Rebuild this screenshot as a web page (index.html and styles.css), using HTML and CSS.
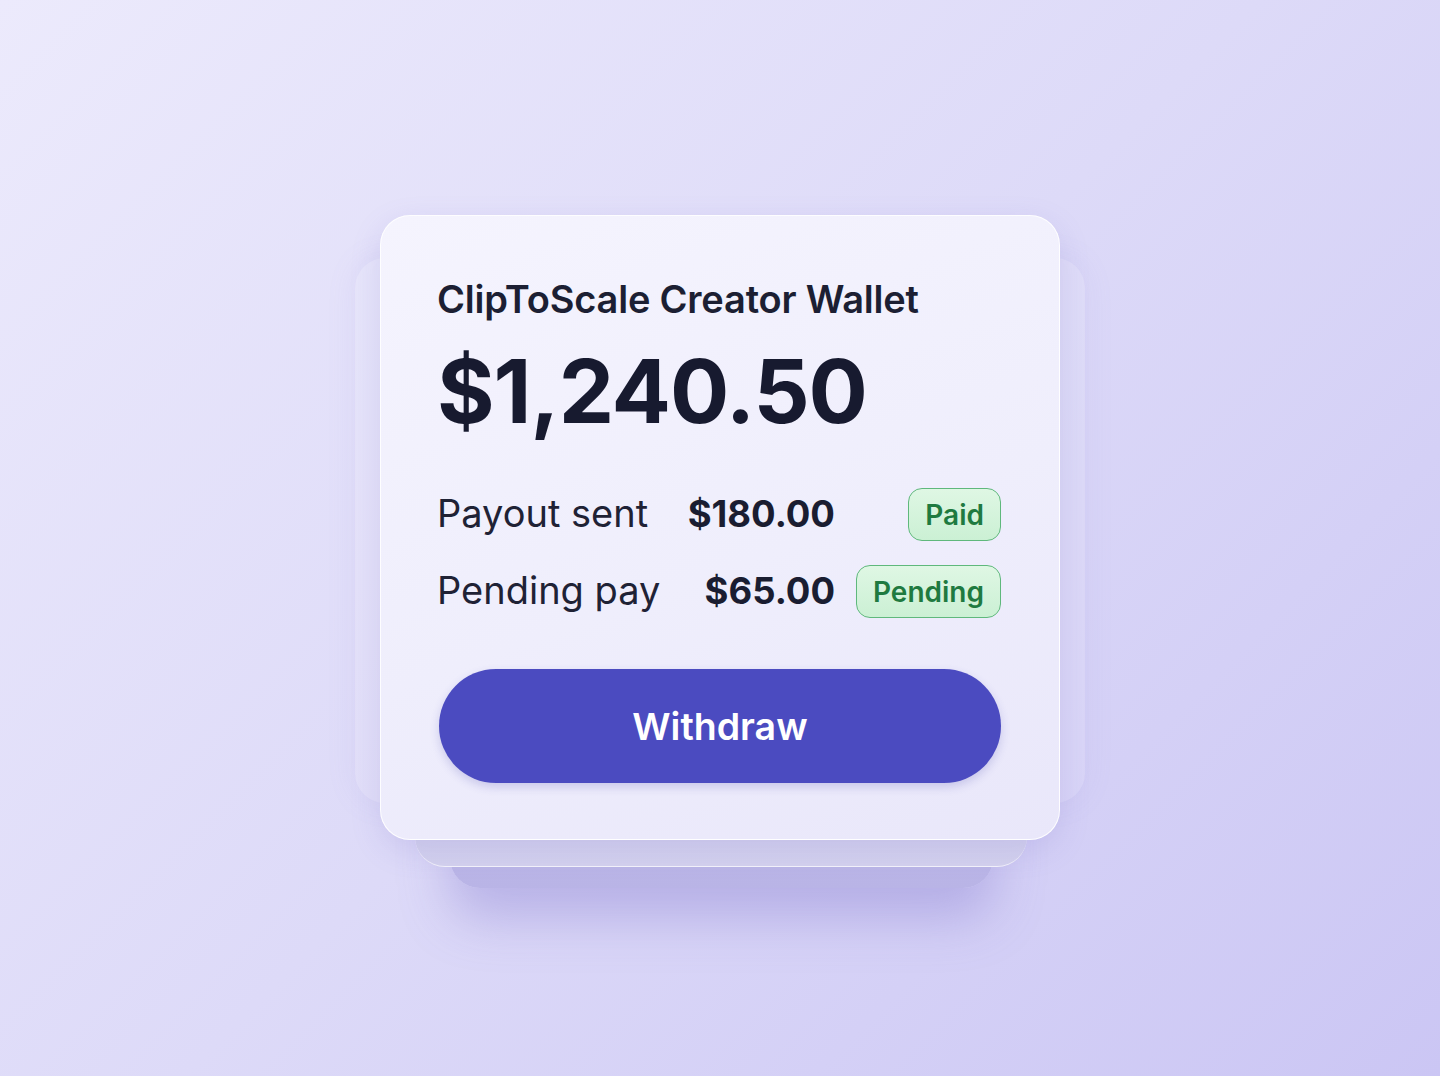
FILE: index.html
```html
<!DOCTYPE html>
<html lang="en">

<head>
  <meta charset="UTF-8">
  <meta name="viewport" content="width=device-width, initial-scale=1.0">
  <title>ClipToScale Creator Wallet</title>
  <link rel="stylesheet" href="styles.css">
</head>

<body>
  <main class="stage">
    <div class="wallet">
      <div class="glass"></div>
      <div class="layer layer-back"></div>
      <div class="layer layer-mid"></div>
      <section class="card">
        <h1 class="card-title">ClipToScale Creator Wallet</h1>
        <p class="balance">$1,240.50</p>
        <div class="rows">
          <span class="label">Payout sent</span>
          <span class="amount">$180.00</span>
          <span class="badge">Paid</span>
          <span class="label">Pending pay</span>
          <span class="amount">$65.00</span>
          <span class="badge">Pending</span>
        </div>
        <button class="withdraw" type="button">Withdraw</button>
      </section>
    </div>
  </main>
</body>

</html>
```

FILE: styles.css
```css
/* lavender backdrop, glass card stack */
body {
  margin: 0;
  min-height: 100vh;
  font-family: Inter, "Noto Sans", sans-serif;
  background: linear-gradient(135deg, #eceafc 0%, #dddaf8 50%, #cbc6f4 100%);
}

.stage {
  display: flex;
  justify-content: center;
  padding-top: 215px;
}

.wallet {
  position: relative;
  width: 680px;
}

.glass {
  position: absolute;
  left: -25px;
  right: -25px;
  top: 43px;
  height: 545px;
  border-radius: 30px;
  background: rgba(255, 255, 255, 0.1);
  box-shadow: 0 0 30px rgba(150, 140, 220, 0.1);
}

.layer {
  position: absolute;
  border-radius: 0 0 30px 30px;
}

.layer-back {
  left: 70px;
  right: 67px;
  top: 400px;
  height: 273px;
  background: linear-gradient(180deg, #c6c2ec, #b9b4e6);
  box-shadow: 0 30px 50px rgba(120, 110, 200, 0.35);
}

.layer-mid {
  left: 35px;
  right: 33px;
  top: 400px;
  height: 251px;
  background: linear-gradient(180deg, #dddbf3, #d3d1ee);
  border-bottom: 1px solid rgba(255, 255, 255, 0.7);
}

.card {
  position: relative;
  box-sizing: border-box;
  height: 625px;
  padding: 60px 58px 58px;
  border-radius: 30px;
  background: linear-gradient(160deg, #f5f4fe 0%, #efeefc 55%, #e9e7fa 100%);
  border: 1px solid rgba(255, 255, 255, 0.9);
  box-shadow: 0 10px 30px rgba(120, 110, 200, 0.18);
}

.card-title {
  margin: 0 0 0 -2px;
  font-size: 38px;
  line-height: 46px;
  font-weight: 600;
  color: #1c1f33;
  letter-spacing: -0.2px;
}

.balance {
  margin: 25px 0 0 -2px;
  font-size: 88px;
  line-height: 88px;
  font-weight: 700;
  color: #171a2f;
  letter-spacing: -1.1px;
}

.rows {
  display: grid;
  grid-template-columns: 1fr auto 145px;
  grid-auto-rows: 53px;
  column-gap: 21px;
  row-gap: 24px;
  align-items: center;
  margin-top: 53px;
}

.label {
  margin: 0 0 4px -2px;
  font-size: 38px;
  color: #1f2235;
}

.amount {
  margin-bottom: 2px;
  font-size: 36.5px;
  font-weight: 700;
  color: #1a1d31;
  text-align: right;
}

.badge {
  justify-self: end;
  box-sizing: border-box;
  height: 53px;
  padding: 0 16px;
  display: flex;
  align-items: center;
  border: 1.5px solid #5fb87c;
  border-radius: 14px;
  background: linear-gradient(180deg, #dff7e4, #cbf0d4);
  color: #1f7a40;
  font-size: 28px;
  font-weight: 600;
}

.withdraw {
  display: block;
  width: 100%;
  height: 114px;
  margin-top: 51px;
  border: 0;
  border-radius: 57px;
  background: #4b4bc0;
  color: #fff;
  font-family: inherit;
  font-size: 37.5px;
  font-weight: 600;
  box-shadow: 0 4px 10px rgba(60, 60, 170, 0.2);
}
```
